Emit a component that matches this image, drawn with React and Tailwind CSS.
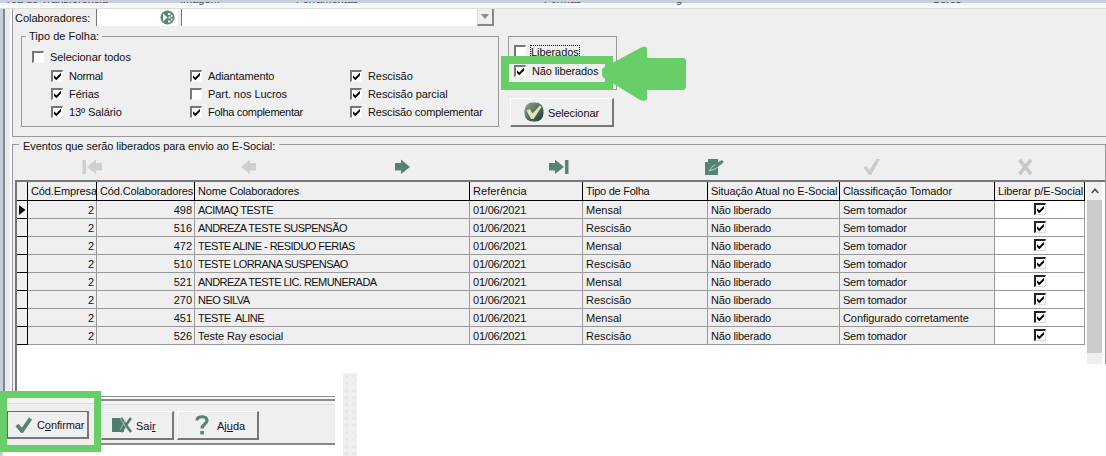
import React from "react";

const COLS = "grid grid-cols-[11px_69px_98px_275px_113px_125px_132px_155px_90px]";

const ROWS = [
  ["498", "ACIMAQ TESTE", "Mensal", "Sem tomador"],
  ["516", "ANDREZA TESTE SUSPENSÃO", "Rescisão", "Sem tomador"],
  ["472", "TESTE ALINE - RESIDUO FERIAS", "Mensal", "Sem tomador"],
  ["510", "TESTE LORRANA SUSPENSAO", "Rescisão", "Sem tomador"],
  ["521", "ANDREZA TESTE LIC. REMUNERADA", "Mensal", "Sem tomador"],
  ["270", "NEO SILVA", "Rescisão", "Sem tomador"],
  ["451", "TESTE\u00a0 ALINE", "Mensal", "Configurado corretamente"],
  ["526", "Teste Ray esocial", "Rescisão", "Sem tomador"],
];

const HEADERS = [
  ["Cód.Empresa", "tracking-[-0.12px]"],
  ["Cód.Colaboradores", "tracking-[-0.13px]"],
  ["Nome Colaboradores", "tracking-[-0.2px]"],
  ["Referência", "tracking-[0.05px]"],
  ["Tipo de Folha", "tracking-[-0.26px]"],
  ["Situação Atual no E-Social", "tracking-[-0.13px]"],
  ["Classificação Tomador", "tracking-[-0.07px]"],
  ["Liberar p/E-Social", "tracking-[-0.13px]"],
];

function Box({ checked, dark }) {
  return (
    <span className={`block size-[12px] shrink-0 border-t-2 border-l-2 border-r border-b bg-white ${dark ? "border-t-[#222] border-l-[#222] border-r-[#ddd] border-b-[#ddd]" : "border-t-[#777] border-l-[#777] border-r-[#f8f8f8] border-b-[#f8f8f8]"}`}>
      {checked && (
        <svg viewBox="0 0 9 9" className="block size-[9px]">
          <path d="M1 3.2 L3.3 5.5 L8 0.8 V3.6 L3.3 8.3 L1 6 Z" fill="#000" />
        </svg>
      )}
    </span>
  );
}

function Check({ label, checked = true, tracking = "tracking-[-0.07px]" }) {
  return (
    <div className="flex h-[18px] items-center gap-[6px]">
      <Box checked={checked} />
      <span className={`whitespace-nowrap ${tracking}`}>{label}</span>
    </div>
  );
}

function Arrow({ color, flip, bar }) {
  return (
    <svg width="20" height="16" viewBox="0 0 20 16" className={flip ? "block -scale-x-100" : "block"} fill={color}>
      <path d="M0 4 H6 V0.5 L15 8 L6 15 V11.5 H0 Z" />
      {bar && <path d="M16 1 H19.5 V15 H16 Z" />}
    </svg>
  );
}

function Nav() {
  return (
    <div className="flex h-[29px] items-center pt-[3px]">
      <div className="w-[160px] pl-[67px]"><Arrow color="#cfcfcf" flip bar /></div>
      <div className="w-[153px] pl-[61px]"><Arrow color="#cfcfcf" flip /></div>
      <div className="w-[155px] pl-[67px]"><Arrow color="#588374" /></div>
      <div className="w-[156px] pl-[66px]"><Arrow color="#588374" bar /></div>
      <div className="w-[157px] pl-[66px]">
        <svg width="19" height="18" viewBox="0 0 19 18" className="block">
          <path d="M0 4 H3 V1 H13 V17 H0 Z" fill="#588374" />
          <path d="M17 3 L8 8 L4 13 L10 11 L18 5 Z" fill="#588374" stroke="#b7cdc4" strokeWidth="1" />
          <path d="M10 6 L17 2 L18.6 4 L12 9 Z" fill="#588374" />
        </svg>
      </div>
      <div className="w-[154px] pl-[67px]">
        <svg width="18" height="18" viewBox="0 0 18 18" className="block">
          <path d="M0.5 9.5 L3 8 L6.5 12 L13.5 1 H17 L8 17 H6 Z" fill="#cacaca" />
        </svg>
      </div>
      <div className="pl-[67px]">
        <svg width="17" height="18" viewBox="0 0 17 18" className="block">
          <path d="M2.5 2 L14 16 M14 2 L2.5 16" stroke="#c8c8c8" strokeWidth="3.6" />
        </svg>
      </div>
    </div>
  );
}

function Table() {
  return (
    <div className="flex h-[184px] border-t-2 border-l-2 border-[#777] bg-white">
      <div className="w-[1068px] shrink-0">
        <div className={`${COLS} h-[19px] border-b border-black bg-[#efefef]`}>
          <div className="border-r border-black" />
          {HEADERS.map(([h, t]) => (
            <div key={h} className="border-r border-black pl-[3px] leading-[18px] whitespace-nowrap">
              <span className={t}>{h}</span>
            </div>
          ))}
        </div>
        {ROWS.map(([code, name, tipo, tomador], i) => (
          <div key={code} className={`${COLS} h-[18px] grid-rows-[18px] bg-[#efefef] leading-[19px] whitespace-nowrap *:border-b *:border-r *:border-[#999]`}>
            <div className="flex items-center border-black!">
              {i === 0 && (
                <svg width="7" height="10" viewBox="0 0 7 10" className="ml-[2px] block"><path d="M0 0 L6.5 5 L0 10Z" /></svg>
              )}
            </div>
            <div className="pr-[2px] text-right">2</div>
            <div className="pr-[2px] text-right">{code}</div>
            <div className={`pl-[3px] ${code === "526" ? "tracking-[-0.06px]" : "tracking-[-0.56px]"}`}>{name}</div>
            <div className="pl-[3px] tracking-[-0.2px]">01/06/2021</div>
            <div className="pl-[3px]">{tipo}</div>
            <div className="pl-[3px] tracking-[-0.2px]">Não liberado</div>
            <div className={`pl-[3px] ${code === "451" ? "tracking-[-0.08px]" : "tracking-[-0.22px]"}`}>{tomador}</div>
            <div className="flex items-center justify-center bg-white pb-px"><Box checked dark /></div>
          </div>
        ))}
      </div>
      <div className="ml-[2px] w-[15px] bg-[#efefef]">
        <div className="flex h-[18px] items-center justify-center">
          <svg width="8" height="6" viewBox="0 0 8 6"><path d="M0.7 5 L4 1.3 L7.3 5" fill="none" stroke="#505050" strokeWidth="1.7" /></svg>
        </div>
        <div className="h-[153px] bg-[#cbcbcb]" />
      </div>
    </div>
  );
}

function Button({ className, children }) {
  return (
    <div className={`flex items-center border-t border-l border-r-2 border-b-2 border-r-[#777] border-b-[#777] bg-[#efefef] ${className}`}>
      {children}
    </div>
  );
}

function Ribbon() {
  return (
    <div className="relative h-[9px] overflow-hidden border-b border-[#deded4] bg-[#f5f8fa] text-[#444]">
      <div className="h-[3px] bg-[#cacede]" />
      <div className="absolute top-[-7px] left-[7px] flex h-[14px] text-[11px] leading-[12px] [clip-path:inset(9px_0_0_0)]">
        <span className="w-[173px]">rea de Transferência</span>
        <span className="w-[116px]">Imagem</span>
        <span className="w-[248px]">Ferramentas</span>
        <span className="w-[132px]">Formas</span>
        <span className="w-[256px]">g</span>
        <span>Cores</span>
      </div>
    </div>
  );
}

export default function App() {
  return (
    <div className="relative h-[456px] w-[1106px] overflow-hidden bg-white font-['Liberation_Sans',Arial,sans-serif] text-[11px] leading-[14px] text-[#111]">
      <Ribbon />
      <div className="flex">
        <div className="flex h-[447px] w-[12px] shrink-0">
          <div className="w-[3px] bg-[#c7cedb]" />
          <div className="h-[383px] w-[2px] bg-[#82878e]" />
          <div className="h-[383px] w-[5px] bg-[#e9ebee]" />
          <div className="w-[2px] bg-[#fdfdfd]" />
        </div>
        <div className="w-[1094px] shrink-0">
          <div className="h-[128px] border-b border-l border-[#999] bg-[#efefef]">
            <div className="flex h-[17px] items-center">
              <span className="w-[83px] pl-[2px]">Colaboradores:</span>
              <div className="flex h-[17px] w-[82px] items-center justify-end border-l border-[#777] bg-white pr-[3px]">
                <svg width="15" height="15" viewBox="0 0 15 15">
                  <circle cx="7.5" cy="7.5" r="7" fill="#5b8579" />
                  <path d="M3 3.5 L7.5 7.5 L3 11.5 Z M8 3 h2.5 v2 h-2.5z M11 5 h1.5 v2 h-1.5z M8.5 6.5 h2 v2 h-2z M11 8.5 h1.5 v2 h-1.5z M8 10.5 h2.5 v2 h-2.5z" fill="#eef4f1" />
                </svg>
              </div>
              <div className="ml-[3px] flex h-[17px] w-[313px] justify-end border-l border-[#777] bg-white">
                <div className="flex w-[17px] items-center justify-center border-r-2 border-b-2 border-l border-[#888] border-l-[#ddd] bg-[#efefef]">
                  <svg width="8" height="5"><path d="M0 0H8L4 5Z" fill="#8c8c8c" /></svg>
                </div>
              </div>
            </div>
            <div className="flex pt-[3px]">
              <fieldset className="ml-[8px] h-[98px] w-[478px] shrink-0 border border-[#999] pl-[4px]">
                <legend className="h-[14px] px-[3px] tracking-[0.02px]">Tipo de Folha:</legend>
                <div className="pt-[5px] pl-[6px]"><Check label="Selecionar todos" checked={false} /></div>
                <div className="grid grid-cols-[139px_160px_140px] pt-[1px] pl-[25px]">
                  <Check label="Normal" tracking="tracking-[-0.3px]" /><Check label="Adiantamento" tracking="tracking-[-0.13px]" /><Check label="Rescisão" />
                  <Check label="Férias" /><Check label="Part. nos Lucros" checked={false} /><Check label="Rescisão parcial" />
                  <Check label="13º Salário" /><Check label="Folha complementar" tracking="tracking-[-0.3px]" /><Check label="Rescisão complementar" tracking="tracking-[-0.16px]" />
                </div>
              </fieldset>
              <div className="ml-[9px] w-[109px] pt-[7px]">
                <div className="h-[54px] border border-[#999] pt-[4px] pl-[5px]">
                  <div className="mb-px flex h-[20px] items-center gap-[4px]">
                    <Box />
                    <span className="h-[13px] border border-dotted border-black leading-[12px] tracking-[-0.07px]">Liberados</span>
                  </div>
                  <Check label="Não liberados" tracking="tracking-[-0.12px]" />
                </div>
                <Button className="mt-[8px] ml-[2px] h-[29px] w-[104px] gap-[4px] border-t-white border-l-white pl-[13px]">
                  <svg width="20" height="20" viewBox="0 0 20 20">
                    <defs>
                      <linearGradient id="orb" x1="0" y1="0" x2="1" y2="1">
                        <stop offset="0" stopColor="#9aa58f" /><stop offset="0.5" stopColor="#54705f" /><stop offset="1" stopColor="#23382f" />
                      </linearGradient>
                    </defs>
                    <rect x="0.5" y="0.5" width="19" height="19" rx="8" fill="url(#orb)" />
                    <path d="M2.5 8.5 L6 7 L8.5 11.5 L16 3.5 L17.5 5 L9.5 17 H7 Z" fill="#e0e6b4" />
                  </svg>
                  <span className="pt-px tracking-[-0.1px]">Selecionar</span>
                </Button>
              </div>
            </div>
          </div>
          <div className="h-[227px] bg-[#efefef]">
            <fieldset className="h-[227px] border border-b-0 border-[#999] pl-[2px]">
              <legend className="ml-[4px] h-[14px] px-[4px] pt-[2px] tracking-[-0.08px]">Eventos que serão liberados para envio ao E-Social:</legend>
              <Nav />
              <Table />
            </fieldset>
          </div>
        </div>
      </div>

      <div className="absolute top-[364px] left-[12px] flex h-[92px] w-[1094px] bg-white">
        <div className="w-[323px]">
          <div className="flex h-[32px]">
            <div className="w-[3px] border-l border-[#999] bg-[#efefef]" />
            <div className="w-[2px] bg-[#777]" />
          </div>
          <div className="h-[5px] border-t border-b-2 border-[#8c8c8c] bg-[#f8f8f8]" />
          <div className="h-[4px] border-b border-[#dcdcdc] bg-[#f2f2f2]" />
          <div className="flex h-[40px] border-b-2 border-[#888] bg-[#efefef] pt-[6px] pl-[89px]">
            <Button className="h-[29px] w-[73px] gap-[4px] border-t-white border-l-white pl-[10px]">
              <svg width="20" height="16" viewBox="0 0 20 16">
                <path d="M0 1 H10 L12 4 V15 H0 Z" fill="#4e7d6c" />
                <path d="M9 1 L19 15 M19 1 L9 15" stroke="#4e7d6c" strokeWidth="2.6" />
                <path d="M8 1 L16 14 M14 2 L8 13" stroke="#b3cbc2" strokeWidth="0.8" />
              </svg>
              <span className="pt-px">Sai<u>r</u></span>
            </Button>
            <Button className="ml-[3px] h-[29px] w-[82px] gap-[8px] border-t-white border-l-white pl-[17px]">
              <svg width="14" height="20" viewBox="0 0 14 20">
                <path d="M2 5.5 C2 0.5 12 0.5 12 5.5 C12 9 7 9 7 13.5" fill="none" stroke="#588374" strokeWidth="3.2" />
                <path d="M5.3 16 H8.8 V19.5 H5.3Z" fill="#588374" />
              </svg>
              <span className="pt-px">Aj<u>u</u>da</span>
            </Button>
          </div>
        </div>
        <div className="mt-[9px] ml-[8px] w-[14px] bg-[#efefef] bg-[radial-gradient(circle,#e6e6e6_1px,transparent_1.5px)] bg-[size:7px_7px]" />
      </div>

      <div className="absolute top-[391px] left-0 h-[61px] w-[101px] border-[7px] border-[#68cf68] bg-[#efefef]">
        <div className="h-[6px] border-b border-[#dcdcdc] bg-[#f4f4f4]" />
        <Button className="mt-[7px] h-[28px] w-[82px] gap-[4px] border-t-[#666] border-l-[#666] pl-[7px]">
          <svg width="18" height="18" viewBox="0 0 18 18">
            <path d="M2 9 L7 15 L15.5 2.5" fill="none" stroke="#588374" strokeWidth="4" strokeLinejoin="round" />
          </svg>
          <span className="pt-px tracking-[-0.1px]">C<u>o</u>nfirmar</span>
        </Button>
      </div>

      <svg className="absolute top-[46px] left-[501px] block" width="187" height="58" viewBox="0 0 187 58">
        <path fill="#68cf68" fillRule="evenodd" d="M0 10 H112 V44 H0 Z M8 18 V36 H104 V18 Z" />
        <path fill="#68cf68" d="M101 24 Q101 22 104 21 L139 2 Q146 -1 146 3 V12 H182 Q185 12 185 15 V40 Q185 44 182 44 H146 V53 Q146 56 139 54 L103 32 Q101 31 101 29 Z" />
      </svg>
    </div>
  );
}
